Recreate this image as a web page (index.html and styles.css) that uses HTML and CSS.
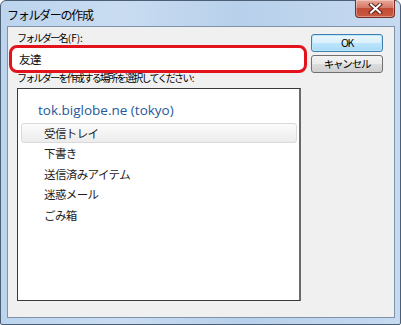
FILE: index.html
```html
<!DOCTYPE html>
<html lang="ja">
<head>
  <meta charset="UTF-8" />
  <title>フォルダーの作成</title>
  <link rel="stylesheet" href="styles.css">
</head>
<body>
  <div class="window">
    <div class="titlebar">
      <span class="title">フォルダーの作成</span>
      <div class="close-btn">
        <svg width="15" height="11" viewBox="0 0 15 11">
          <path d="M3 1.5 L12 9.5 M12 1.5 L3 9.5" stroke="#5a1f18" stroke-width="4" stroke-linecap="square" fill="none"/>
          <path d="M3 1.5 L12 9.5 M12 1.5 L3 9.5" stroke="#fff" stroke-width="2" stroke-linecap="square" fill="none"/>
        </svg>
      </div>
    </div>
    <div class="client">
      <div class="left">
        <label class="label first">フォルダー名<span class="ascii">(F):</span></label>
        <div class="highlight">
          <input class="name-input" type="text" value="友達" />
        </div>
        <label class="label second">フォルダーを作成する場所を選択してください<span class="ascii">:</span></label>
        <div class="tree">
          <div class="account">tok.biglobe.ne (tokyo)</div>
          <div class="item selected">受信トレイ</div>
          <div class="item">下書き</div>
          <div class="item">送信済みアイテム</div>
          <div class="item">迷惑メール</div>
          <div class="item">ごみ箱</div>
        </div>
      </div>
      <div class="buttons">
        <button class="btn default">OK</button>
        <button class="btn">キャンセル</button>
      </div>
    </div>
  </div>
</body>
</html>
```

FILE: styles.css
```css
body {
  margin: 0;
  font-family: "Noto Sans CJK JP", "Liberation Sans", sans-serif;
  background: #fff;
}
.window {
  width: 399px;
  height: 323px;
  border: 1px solid #4d5f75;
  border-radius: 6px 6px 2px 2px;
  background: linear-gradient(90deg, #bcd4ee 0%, #c9dcf1 30%, #b8d0eb 60%, #c6daf0 100%);
}
.titlebar {
  height: 25px;
  display: flex;
  align-items: center;
  justify-content: space-between;
}
.title {
  margin-left: 6px;
  margin-top: 1px;
  font-size: 12px;
  letter-spacing: -1.3px;
  color: #000;
}
.close-btn {
  align-self: flex-start;
  width: 38px;
  height: 17px;
  margin-right: 5px;
  margin-top: -1px;
  border: 1px solid #7a2d25;
  border-top: none;
  border-radius: 0 0 4px 4px;
  background: linear-gradient(#e8a796 0%, #d47a68 45%, #c24a36 50%, #c85a40 100%);
  display: flex;
  align-items: center;
  justify-content: center;
  box-shadow: inset 0 0 0 1px rgba(255,255,255,0.35);
}
.client {
  width: 386px;
  height: 290px;
  margin-left: 6px;
  border: 1px solid #7e92ab;
  background: #f0f0f0;
  display: flex;
}
.left {
  width: 298px;
  margin-left: 1px;
}
.label {
  display: block;
  padding-left: 8px;
  font-size: 10px;
  letter-spacing: -1.7px;
  color: #000;
  line-height: 12px;
}
.label .ascii {
  letter-spacing: 0;
  margin-left: 1px;
}
.label.first {
  margin-top: 5px;
  height: 13px;
}
.highlight {
  height: 22px;
  border: 3px solid #e3131d;
  border-radius: 8px;
  background: #fff;
  display: flex;
  align-items: center;
}
.name-input {
  border: none;
  outline: none;
  background: transparent;
  font-family: "Noto Sans CJK JP", sans-serif;
  font-size: 11.5px;
  letter-spacing: -0.5px;
  color: #111;
  padding: 0 0 0 7px;
  width: 280px;
}
.label.second {
  margin-top: -1px;
  height: 16px;
}
.tree {
  margin-left: 8px;
  width: 281px;
  height: 200px;
  border: 1px solid #3a3a3a;
  border-right: 2px solid #6a6a6a;
  background: #fff;
  padding-top: 11px;
}
.account {
  height: 20px;
  line-height: 20px;
  padding-left: 20px;
  font-family: "Open Sans", "Noto Sans", sans-serif;
  font-size: 13.5px;
  color: #25589a;
  margin-bottom: 3px;
}
.item {
  height: 20.5px;
  line-height: 20px;
  padding-left: 23px;
  margin: 0 2px 0 3px;
  font-size: 11.5px;
  letter-spacing: -0.6px;
  color: #1e1e1e;
  box-sizing: border-box;
}
.item.selected {
  height: 20px;
  border: 1px solid #dadada;
  border-radius: 3px;
  background: linear-gradient(#fbfbfb, #ececec);
  line-height: 18px;
  padding-left: 22px;
}
.buttons {
  margin-left: 4px;
  margin-top: 7px;
  display: flex;
  flex-direction: column;
  gap: 3px;
}
.btn {
  width: 72px;
  height: 18px;
  padding: 0;
  border: 1px solid #707070;
  border-radius: 3px;
  background: linear-gradient(#f3f3f3 0%, #ebebeb 50%, #dddddd 50%, #cfcfcf 100%);
  font-family: "Noto Sans CJK JP", sans-serif;
  font-size: 10.5px;
  letter-spacing: -1.2px;
  line-height: 14px;
  color: #000;
}
.btn.default {
  border-color: #3c7fb1;
  background: linear-gradient(#eaf6fd 0%, #d9f0fc 50%, #bee6fd 50%, #a7d9f5 100%);
  box-shadow: inset 0 0 0 1px #bfe6f9;
}
```
